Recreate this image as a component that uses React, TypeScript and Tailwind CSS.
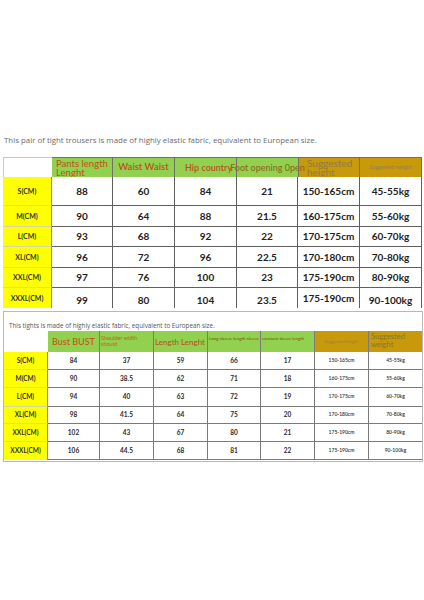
import React from "react";

const pants = [
  ["S(CM)", "88", "60", "84", "21", "150-165cm", "45-55kg"],
  ["M(CM)", "90", "64", "88", "21.5", "160-175cm", "55-60kg"],
  ["L(CM)", "93", "68", "92", "22", "170-175cm", "60-70kg"],
  ["XL(CM)", "96", "72", "96", "22.5", "170-180cm", "70-80kg"],
  ["XXL(CM)", "97", "76", "100", "23", "175-190cm", "80-90kg"],
  ["XXXL(CM)", "99", "80", "104", "23.5", "175-190cm", "90-100kg"],
];

const tops = [
  ["S(CM)", "84", "37", "59", "66", "17", "150-165cm", "45-55kg"],
  ["M(CM)", "90", "38.5", "62", "71", "18", "160-175cm", "55-60kg"],
  ["L(CM)", "94", "40", "63", "72", "19", "170-175cm", "60-70kg"],
  ["XL(CM)", "98", "41.5", "64", "75", "20", "170-180cm", "70-80kg"],
  ["XXL(CM)", "102", "43", "67", "80", "21", "175-190cm", "80-90kg"],
  ["XXXL(CM)", "106", "44.5", "68", "81", "22", "175-190cm", "90-100kg"],
];

function PantsTable() {
  return (
    <div className="grid grid-cols-[49px_61px_62px_62px_61px_62px_62px] grid-rows-[20px_29px_21px_20px_21px_20px_20px] w-[419px]">
      {/* Header */}
      <div className="border-t border-l border-[#c8c8c8] bg-white" />
      <div className="bg-[#92d050] border-t border-r border-[#6f6f6f] overflow-hidden pl-[4px] text-[9.5px] leading-[9px] text-[#c0561b] font-medium pt-[1px]">
        Pants length Lenght
      </div>
      <div className="bg-[#92d050] border-t border-r border-[#6f6f6f] flex items-center justify-center text-[9.5px] text-[#b9531d] font-semibold whitespace-nowrap">
        Waist Waist
      </div>
      <div className="bg-[#92d050] border-t border-r border-[#6f6f6f] flex items-center pl-[10px] text-[9px] text-[#b9531d] font-semibold whitespace-nowrap overflow-hidden">
        Hip country
      </div>
      <div className="bg-[#92d050] border-t border-[#6f6f6f] flex items-center justify-center text-[9px] text-[#8a6a1c] font-medium whitespace-nowrap relative z-10">
        Foot opening 0pen
      </div>
      <div className="bg-[#c8990a] border-t border-l border-r border-[#6f6f6f] overflow-hidden pl-[8px] text-[10px] leading-[9px] text-[#8d7c45] pt-[1px]">
        Suggested height
      </div>
      <div className="bg-[#c8990a] border-t border-r border-[#6f6f6f] flex items-center justify-center text-[5.5px] text-[#94824c] whitespace-nowrap">
        Suggested weight
      </div>
      {/* Rows */}
      {pants.map((row, r) =>
        row.map((v, c) => {
          const last = r === pants.length - 1;
          if (c === 0) {
            return (
              <div
                key={`${r}-${c}`}
                className={`bg-[#ffff00] border-r border-[#8a8a8a] ${last ? "" : "border-b border-b-[#d6d6a0]"} flex items-center justify-center text-[7px] font-bold text-[#333]`}
              >
                {v}
              </div>
            );
          }
          const lower = last && c !== 5;
          return (
            <div
              key={`${r}-${c}`}
              className={`bg-white border-r border-[#5f5f5f] ${last ? "" : "border-b"} flex justify-center ${lower ? "items-end" : "items-center"} text-[10px] font-bold text-[#222]`}
            >
              {v}
            </div>
          );
        })
      )}
    </div>
  );
}

function TopsTable() {
  return (
    <div className="grid grid-cols-[44px_52px_54px_54px_53px_54px_54px_53px] grid-rows-[21px_18px_18px_19px_17px_18px_18px] w-[418px]">
      <div className="bg-white" />
      <div className="bg-[#92d050] border-r border-[#7a7a7a] flex items-center justify-center text-[9px] text-[#c0561b] font-medium whitespace-nowrap">
        Bust BUST
      </div>
      <div className="bg-[#92d050] border-r border-[#7a7a7a] overflow-hidden pl-[1px] text-[5.5px] leading-[6px] text-[#c0601b] pt-[4px]">
        Shoulder width should
      </div>
      <div className="bg-[#92d050] border-r border-[#7a7a7a] flex items-center pl-[1px] text-[8px] text-[#b3521d] whitespace-nowrap overflow-hidden">
        Length Lenght
      </div>
      <div className="bg-[#92d050] border-r border-[#7a7a7a] overflow-hidden pl-[1px] text-[4.5px] leading-[5px] text-[#7a4a12] pt-[5px]">
        Long sleeve length sleeve
      </div>
      <div className="bg-[#92d050] border-r border-[#7a7a7a] flex items-start pl-[1px] text-[4.3px] leading-[5px] text-[#7a4a12] pt-[5px] whitespace-nowrap">
        constant sleeve length
      </div>
      <div className="bg-[#c8990a] border-r border-[#7a7a7a] flex items-center justify-center text-[4.5px] text-[#94824c] whitespace-nowrap pt-[2px]">
        Suggested height
      </div>
      <div className="bg-[#c8990a] overflow-hidden pl-[2px] text-[7.5px] leading-[8px] text-[#85723a] pt-[2px]">
        Suggested weight
      </div>
      {tops.map((row, r) =>
        row.map((v, c) => {
          const last = r === tops.length - 1;
          if (c === 0) {
            return (
              <div
                key={`${r}-${c}`}
                className={`bg-[#ffff00] border-r border-[#8a8a8a] ${last ? "" : "border-b border-b-[#d6d6a0]"} flex items-center justify-center text-[6.5px] font-bold text-[#333]`}
              >
                {v}
              </div>
            );
          }
          const small = c >= 6;
          return (
            <div
              key={`${r}-${c}`}
              className={`bg-white ${c === 7 ? "" : "border-r"} border-b border-[#7a7a7a] flex items-center justify-center ${small ? "text-[5px] font-semibold" : "text-[6.5px] font-bold"} text-[#2a2a2a]`}
            >
              {v}
            </div>
          );
        })
      )}
    </div>
  );
}

export default function App() {
  return (
    <div className="w-[424px] h-[600px] bg-white font-['Lato',sans-serif]">
      <div className="pt-[136px] pl-[3px]">
        <p className="h-[21px] pl-[1px] text-[7.9px] leading-[9px] text-[#6b6b6b] font-['Open_Sans',sans-serif] whitespace-nowrap">
          This pair of tight trousers is made of highly elastic fabric, equivalent to European size.
        </p>
        <PantsTable />
        <div className="mt-[3px] w-[420px] border border-[#b8b8b8] pb-[1px]">
          <p className="h-[19px] pl-[5px] pt-[10px] text-[6.3px] leading-[7px] text-[#555] font-['Open_Sans',sans-serif] whitespace-nowrap">
            This tights is made of highly elastic fabric, equivalent to European size.
          </p>
          <TopsTable />
        </div>
      </div>
    </div>
  );
}
